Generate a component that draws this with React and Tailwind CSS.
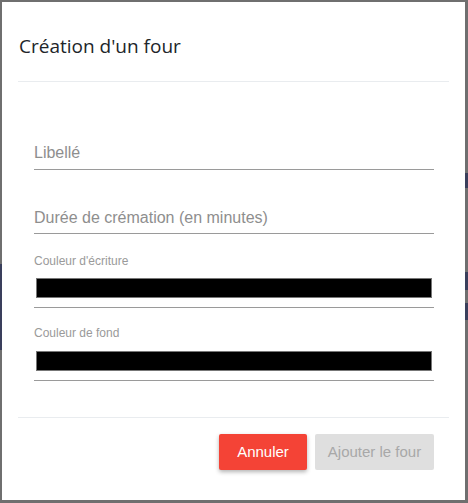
import React from "react";

export default function App() {
  return (
    <div className="relative w-[468px] h-[503px] bg-[#6f6f6f] pt-[2px] pl-[2px] pr-[3px] pb-[3px] overflow-hidden">
      {/* background hints behind the overlay */}
      <div className="absolute right-0 top-[173px] w-[3px] h-[15px] bg-[#3a3f5c]" />
      <div className="absolute right-0 top-[272px] w-[3px] h-[18px] bg-[#3a3f5c]" />
      <div className="absolute right-0 top-[303px] w-[3px] h-[17px] bg-[#3a3f5c]" />
      <div className="absolute left-0 top-[264px] w-[2px] h-[86px] bg-[#3a3f5c]" />
      <div className="w-full h-full bg-white flex flex-col" style={{ fontFamily: "'Liberation Sans', Arial, sans-serif" }}>
        {/* header */}
        <div className="mx-[16px] pt-[30px] pb-[21px] border-b border-[#e9ecef]">
          <h1 className="text-[19px] leading-[28px] text-[#212529] pl-[1px]" style={{ fontFamily: "'Open Sans', 'Noto Sans', sans-serif" }}>
            Création d'un four
          </h1>
        </div>
        {/* body */}
        <div className="pl-[32px] pr-[31px] pt-[59px] pb-[36px] flex flex-col">
          <div className="border-b border-[#9a9a9a] pb-[4px]">
            <div className="text-[16px] leading-[24px] text-[#8e8e8e]">Libellé</div>
          </div>
          <div className="mt-[36px] border-b border-[#9a9a9a] pb-[3px]">
            <div className="text-[16px] leading-[24px] text-[#8e8e8e]">Durée de crémation (en minutes)</div>
          </div>
          <div className="mt-[19px] text-[12px] leading-[16px] text-[#9a9a9a]">Couleur d'écriture</div>
          <div className="mt-[9px] border-b border-[#9a9a9a] pb-[9px] px-[2px]">
            <div className="h-[20px] bg-black border border-[#777777]" />
          </div>
          <div className="mt-[17px] text-[12px] leading-[16px] text-[#9a9a9a]">Couleur de fond</div>
          <div className="mt-[10px] border-b border-[#9a9a9a] pb-[9px] px-[2px]">
            <div className="h-[20px] bg-black border border-[#777777]" />
          </div>
        </div>
        {/* footer */}
        <div className="mx-[16px] border-t border-[#e9ecef] pt-[16px] pr-[15px] flex justify-end gap-[8px]">
          <button className="w-[88px] h-[36px] rounded-[2px] bg-[#f44336] text-white text-[15px] shadow-[0_2px_4px_rgba(0,0,0,0.3)]">
            Annuler
          </button>
          <button className="w-[119px] h-[36px] rounded-[2px] bg-[#dfdfdf] text-[#a8a8a8] text-[15px]">
            Ajouter le four
          </button>
        </div>
      </div>
    </div>
  );
}
